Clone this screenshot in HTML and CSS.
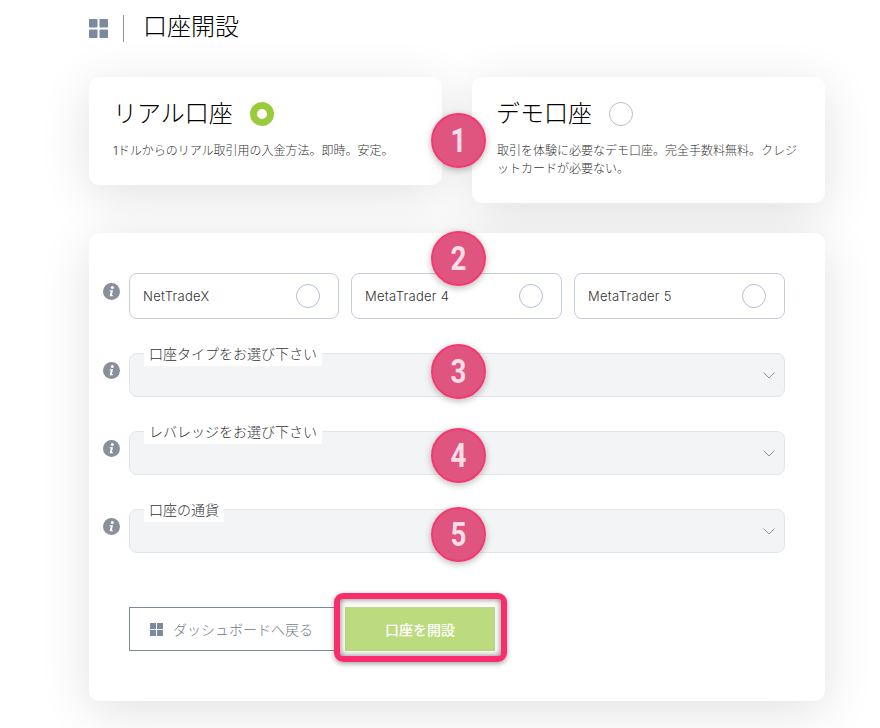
FILE: index.html
```html
<!DOCTYPE html>
<html lang="ja">
<head>
<meta charset="utf-8">
<title>口座開設</title>
<link rel="stylesheet" href="styles.css">
</head>
<body>
<main class="page">
  <header class="head">
    <svg class="grid-icon" viewBox="0 0 19 19"><g fill="#7b8a9c"><rect width="8.5" height="8.5" rx=".8"/><rect x="10.5" width="8.5" height="8.5" rx=".8"/><rect y="10.5" width="8.5" height="8.5" rx=".8"/><rect x="10.5" y="10.5" width="8.5" height="8.5" rx=".8"/></g></svg>
    <span class="divider"></span>
    <h1 class="title">口座開設</h1>
  </header>

  <section class="types">
    <article class="card card-real">
      <div class="card-head"><h2 class="card-title">リアル口座</h2><span class="radio-big radio-on"></span></div>
      <p class="card-text">1ドルからのリアル取引用の入金方法。即時。安定。</p>
    </article>
    <article class="card card-demo">
      <div class="card-head"><h2 class="card-title">デモ口座</h2><span class="radio-big"></span></div>
      <p class="card-text">取引を体験に必要なデモ口座。完全手数料無料。クレジットカードが必要ない。</p>
    </article>
    <span class="badge badge-1"><span class="digit">1</span></span>
  </section>

  <section class="form">
    <span class="badge badge-2"><span class="digit">2</span></span>
    <div class="row row-options">
      <svg class="info" viewBox="0 0 17 17"><circle cx="8.5" cy="8.5" r="8.5" fill="#8a8f9a"/><circle cx="9.3" cy="4.4" r="1.5" fill="#fff"/><path d="M6.6 7.2h3.4l-1.2 5h1.2v1H6.6l1.2-5H6.6z" fill="#fff"/></svg>
      <div class="options">
        <label class="option"><span>NetTradeX</span><span class="radio-big"></span></label>
        <label class="option"><span>MetaTrader 4</span><span class="radio-big"></span></label>
        <label class="option"><span>MetaTrader 5</span><span class="radio-big"></span></label>
      </div>
    </div>
    <div class="row">
      <svg class="info" viewBox="0 0 17 17"><circle cx="8.5" cy="8.5" r="8.5" fill="#8a8f9a"/><circle cx="9.3" cy="4.4" r="1.5" fill="#fff"/><path d="M6.6 7.2h3.4l-1.2 5h1.2v1H6.6l1.2-5H6.6z" fill="#fff"/></svg>
      <div class="select">
        <span class="select-label">口座タイプをお選び下さい</span>
        <svg class="chevron" viewBox="0 0 12 7"><path d="M.6.6 6 6l5.4-5.4" fill="none" stroke="#8d929b" stroke-width="1"/></svg>
        <span class="badge badge-3"><span class="digit">3</span></span>
      </div>
    </div>
    <div class="row">
      <svg class="info" viewBox="0 0 17 17"><circle cx="8.5" cy="8.5" r="8.5" fill="#8a8f9a"/><circle cx="9.3" cy="4.4" r="1.5" fill="#fff"/><path d="M6.6 7.2h3.4l-1.2 5h1.2v1H6.6l1.2-5H6.6z" fill="#fff"/></svg>
      <div class="select">
        <span class="select-label">レバレッジをお選び下さい</span>
        <svg class="chevron" viewBox="0 0 12 7"><path d="M.6.6 6 6l5.4-5.4" fill="none" stroke="#8d929b" stroke-width="1"/></svg>
        <span class="badge badge-4"><span class="digit">4</span></span>
      </div>
    </div>
    <div class="row">
      <svg class="info" viewBox="0 0 17 17"><circle cx="8.5" cy="8.5" r="8.5" fill="#8a8f9a"/><circle cx="9.3" cy="4.4" r="1.5" fill="#fff"/><path d="M6.6 7.2h3.4l-1.2 5h1.2v1H6.6l1.2-5H6.6z" fill="#fff"/></svg>
      <div class="select">
        <span class="select-label">口座の通貨</span>
        <svg class="chevron" viewBox="0 0 12 7"><path d="M.6.6 6 6l5.4-5.4" fill="none" stroke="#8d929b" stroke-width="1"/></svg>
        <span class="badge badge-5"><span class="digit">5</span></span>
      </div>
    </div>
    <div class="actions">
      <a class="btn-back">
        <svg class="grid-small" viewBox="0 0 13 13"><g fill="#7b8a9c"><rect width="6" height="6"/><rect x="7" width="6" height="6"/><rect y="7" width="6" height="6"/><rect x="7" y="7" width="6" height="6"/></g></svg>
        ダッシュボードへ戻る
      </a>
      <button class="btn-open">口座を開設</button>
    </div>
  </section>
</main>
</body>
</html>
```
FILE: styles.css
```css
* { box-sizing: border-box; }
html, body { margin: 0; padding: 0; }
body {
  background: #fff;
  font-family: Inter, "Noto Sans CJK JP", sans-serif;
  color: #444;
  overflow: hidden;
}
.page { width: 880px; height: 728px; padding-left: 89px; }

.head { height: 77px; display: flex; align-items: flex-start; }
.grid-icon { width: 19px; height: 19px; margin-top: 19px; }
.divider { width: 1px; height: 27px; margin: 15px 0 0 15px; background: #8a94a3; }
.title { margin: 10px 0 0 19px; font-size: 24px; line-height: 34px; font-weight: 300; color: #000; }

.types { position: relative; display: flex; align-items: flex-start; gap: 30px; width: 736px; }
.card {
  width: 353px;
  background: #fff;
  border-radius: 10px;
  box-shadow: 0 10px 50px rgba(0, 0, 0, .12);
}
.card-real { height: 108px; padding: 22px 24px 0; }
.card-demo { height: 126px; padding: 22px 24px 0; }
.card-head { display: flex; align-items: center; height: 30px; gap: 17px; }
.card-title { margin: 0; font-size: 24px; line-height: 30px; font-weight: 300; color: #000; }
.card-text { margin: 13px 0 0 1px; font-size: 12px; line-height: 18px; font-weight: 300; color: #333; }
.card-real .card-text { margin-left: 0; }

.radio-big { display: block; flex: none; width: 24px; height: 24px; border-radius: 50%; border: 1px solid #b8bfca; background: #fff; }
.radio-on { border: 7px solid #9acb3c; }

.badge {
  position: absolute;
  width: 55px;
  height: 55px;
  display: flex;
  align-items: center;
  justify-content: center;
  border-radius: 50%;
  border: 2px solid #f5386f;
  background: rgba(222, 78, 122, .96);
  box-shadow: 0 2px 7px rgba(0, 0, 0, .28);
  color: #fbdde7;
  font-family: Roboto, sans-serif;
  font-size: 33px;
  font-weight: 700;
  z-index: 2;
}
.digit { display: block; transform: scaleX(.84); }
.badge-1 { top: 36px; left: 342px; }
.badge-2 { top: -2px; left: 342px; }
.badge-3, .badge-4, .badge-5 { left: 301px; }
.badge-3 { top: -10px; }
.badge-4 { top: -4px; }
.badge-5 { top: -3px; }

.form {
  position: relative;
  width: 736px;
  height: 468px;
  margin-top: 30px;
  padding: 40px 0 0 14px;
  background: #fff;
  border-radius: 10px;
  box-shadow: 0 10px 50px rgba(0, 0, 0, .12);
}
.row { display: flex; align-items: flex-start; gap: 9px; margin-bottom: 34px; }
.row-options .info { margin-top: 10px; }
.info { flex: none; width: 17px; height: 17px; margin-top: 9px; }

.options { display: grid; grid-template-columns: 210px 211px 211px; gap: 12px; width: 656px; }
.option {
  height: 46px;
  display: flex;
  align-items: center;
  justify-content: space-between;
  padding: 0 18px 0 13px;
  border: 1px solid #c5ccd9;
  border-radius: 8px;
  font-size: 13px;
  font-weight: 300;
  letter-spacing: .3px;
  color: #333;
}

.select {
  position: relative;
  width: 656px;
  height: 44px;
  background: #f3f4f6;
  border: 1px solid #e2e5ec;
  border-radius: 8px;
}
.select-label {
  position: absolute;
  left: 14px;
  top: -9px;
  height: 21px;
  padding: 0 5px;
  background: #fff;
  font-size: 14px;
  line-height: 18px;
  font-weight: 300;
  color: #333;
}
.chevron { position: absolute; right: 9px; top: 18px; width: 12px; height: 7px; }

.actions { position: relative; display: flex; margin: 54px 0 0 26px; }
.btn-back {
  display: flex;
  align-items: center;
  gap: 10px;
  width: 211px;
  height: 44px;
  padding-left: 20px;
  border: 1px solid #7b8a9c;
  font-size: 14px;
  font-weight: 300;
  color: #6f7c8a;
}
.grid-small { width: 13px; height: 13px; }
.btn-open {
  position: relative;
  width: 150px;
  height: 44px;
  margin-left: 5px;
  border: 0;
  padding: 0;
  background: #bbdb7e;
  color: #fff;
  font-family: inherit;
  font-size: 14px;
  font-weight: 500;
}
.btn-open::after {
  content: "";
  position: absolute;
  inset: -14px -12px -11px -11px;
  border: 6px solid #f92c6c;
  border-radius: 9px;
  box-shadow: 0 2px 5px rgba(0, 0, 0, .35), inset 0 0 6px rgba(0, 0, 0, .55);
}
```
